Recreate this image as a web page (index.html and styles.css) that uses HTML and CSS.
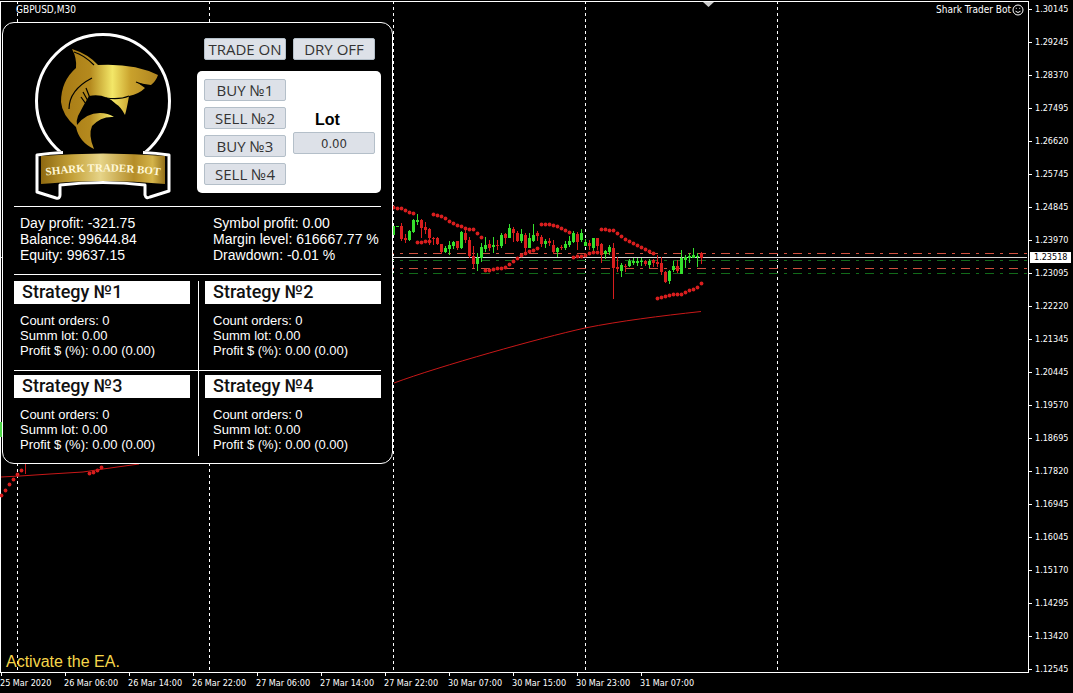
FILE: index.html
```
<!DOCTYPE html>
<html lang="en">
<head>
<meta charset="utf-8">
<title>GBPUSD,M30</title>
<link rel="stylesheet" href="styles.css">
</head>
<body>
<main class="terminal">
  <section class="chart">
    <svg class="plot" id="plot" aria-hidden="true"></svg>
    <header class="chart-head">
      <span>GBPUSD,M30</span>
      <span class="expert">Shark Trader Bot
        <svg class="smile" viewBox="0 0 12 12"><circle cx="6" cy="6" r="5"/><path d="M3.5 7.2Q6 9.8 8.5 7.2M4.3 3.8v1M7.7 3.8v1"/></svg>
      </span>
    </header>
    <section class="panel">
      <div class="top">
        <svg class="logo" viewBox="0 0 138 170" role="img" aria-label="Shark Trader Bot">
          <defs>
            <linearGradient id="gold" x1="0" x2="1" y1="0" y2="0">
              <stop offset="0" stop-color="#a77a14"/><stop offset=".3" stop-color="#b58a1e"/><stop offset=".53" stop-color="#f3e768"/><stop offset=".72" stop-color="#c9a12c"/><stop offset="1" stop-color="#b08520"/>
            </linearGradient>
            <linearGradient id="ribbon" x1="0" x2="1" y1="0" y2="0">
              <stop offset="0" stop-color="#8e6910"/><stop offset=".25" stop-color="#c4a139"/><stop offset=".48" stop-color="#e6d488"/><stop offset=".75" stop-color="#b58d28"/><stop offset=".9" stop-color="#d4b44a"/><stop offset="1" stop-color="#94701a"/>
            </linearGradient>
            <path id="arc" d="M9 144Q69 135 129 144"/>
          </defs>
          <circle cx="69" cy="69" r="66.500" fill="none" stroke="#fff" stroke-width="3"/>
          <path d="M2.500 122Q16 120 29 119L109 119Q122 120 135 122V161L114 166L111 154Q69 148 27 154L25 166L2.500 160Z" fill="#000"/>
          <path d="M29 120.500Q16 121 3 123V160L22 166Q26 167 26 163V153Q69 148 111 153V163Q112 167 116 165L135 159V123Q122 121 109 120.500" fill="none" stroke="#fff" stroke-width="3" stroke-linejoin="round"/>
          <path d="M7 124Q69 119 131 124V152Q69 146 7 152Z" fill="url(#ribbon)"/>
          <text class="ribbon-text"><textPath href="#arc" startOffset="50%">SHARK TRADER BOT</textPath></text>
          <path d="M38 17Q54 22 64 33Q100 31 124 43Q122 49 117 53L104 51L111 56Q105 62 95 64Q93 76 91 83Q87 75 82 72Q71 61 55 64Q49 74 44 84Q42 89 43 93Q52 81 66 81Q74 81 80 85Q67 84 58 94Q54 103 60 117Q45 110 42 95Q28 83 27 70Q27 49 42 36Q43 26 38 17Z" fill="url(#gold)"/>
          <path d="M72 66Q86 68 95 64M35 77Q35 58 58 46M40 20Q50 23 60 33M52 56L56 66M49 60L54 69M47 65L52 72M102 50L110 53" fill="none" stroke="#000" stroke-width="1.200"/>
        </svg>
        <div class="controls">
          <div class="pair">
            <button class="btn">TRADE ON</button>
            <button class="btn">DRY OFF</button>
          </div>
          <div class="orders">
            <div class="order-list">
              <button class="btn">BUY №1</button>
              <button class="btn">SELL №2</button>
              <button class="btn">BUY №3</button>
              <button class="btn">SELL №4</button>
            </div>
            <div class="lot">
              <label for="lot">Lot</label>
              <input class="btn lot-input" id="lot" value="0.00">
            </div>
          </div>
        </div>
      </div>
      <div class="stats">
        <p>Day profit: -321.75<br>Balance: 99644.84<br>Equity: 99637.15</p>
        <p>Symbol profit: 0.00<br>Margin level: 616667.77 %<br>Drawdown: -0.01 %</p>
      </div>
      <div class="strategies">
        <article><h2>Strategy №1</h2><p>Count orders: 0<br>Summ lot: 0.00<br>Profit $ (%): 0.00 (0.00)</p></article>
        <article><h2>Strategy №2</h2><p>Count orders: 0<br>Summ lot: 0.00<br>Profit $ (%): 0.00 (0.00)</p></article>
        <article><h2>Strategy №3</h2><p>Count orders: 0<br>Summ lot: 0.00<br>Profit $ (%): 0.00 (0.00)</p></article>
        <article><h2>Strategy №4</h2><p>Count orders: 0<br>Summ lot: 0.00<br>Profit $ (%): 0.00 (0.00)</p></article>
      </div>
    </section>
    <p class="notice">Activate the EA.</p>
  </section>
  <aside class="prices">
    <ul>
      <li>1.30145</li><li>1.29245</li><li>1.28370</li><li>1.27495</li><li>1.26620</li><li>1.25745</li><li>1.24845</li><li>1.23970</li><li>1.23095</li><li>1.22220</li><li>1.21345</li><li>1.20445</li><li>1.19570</li><li>1.18695</li><li>1.17820</li><li>1.16945</li><li>1.16045</li><li>1.15170</li><li>1.14295</li><li>1.13420</li><li>1.12545</li>
    </ul>
    <span class="current">1.23518</span>
  </aside>
  <ol class="times">
    <li>25 Mar 2020</li><li>26 Mar 06:00</li><li>26 Mar 14:00</li><li>26 Mar 22:00</li><li>27 Mar 06:00</li><li>27 Mar 14:00</li><li>27 Mar 22:00</li><li>30 Mar 07:00</li><li>30 Mar 15:00</li><li>30 Mar 23:00</li><li>31 Mar 07:00</li>
  </ol>
</main>
<script src="chart.js"></script>
</body>
</html>
```
FILE: styles.css
```
* { box-sizing: border-box; margin: 0; padding: 0; }
body { background: #000; color: #fff; font: 10px/19px "DejaVu Sans Condensed", "DejaVu Sans", sans-serif; }
ul, ol { list-style: none; }
.terminal { display: grid; grid-template-columns: minmax(0, 1fr) 44px; grid-template-rows: 1fr 20px; min-height: 100vh; overflow: hidden; }
.chart { position: relative; margin-top: 1px; border: 1px solid #fff; }
.plot { position: absolute; left: -1px; top: -2px; width: 100%; height: 100%; overflow: hidden; }
.chart-head { position: relative; display: flex; justify-content: space-between; padding: 0 4px 0 15px; line-height: 16px; }
.expert { display: flex; align-items: center; gap: 1px; }
.smile { width: 12px; height: 12px; fill: none; stroke: #fff; stroke-width: 1; }

.panel { position: absolute; left: 1px; top: 20px; width: 391px; padding: 9px 11px 7px; background: #000; border: 1px solid #fff; border-radius: 12px; font-family: "Liberation Sans", Arial, sans-serif; }
.top { display: flex; justify-content: space-between; height: 175px; padding-left: 20px; border-bottom: 1px solid #fff; }
.logo { width: 138px; height: 170px; }
.ribbon-text { font: 600 11px "Liberation Serif", serif; fill: #fff8d8; text-anchor: middle; }
.controls { width: 184px; }
.pair { display: flex; gap: 7px; padding: 6px 6px 11px 7px; }
.btn { width: 82px; height: 22px; background: #dde1e8; color: #333; border: 1px solid #b4bfc9; border-radius: 2px; font: 15px/20px "Open Sans", sans-serif; text-align: center; white-space: nowrap; }
.orders { display: flex; gap: 7px; padding: 8px 6px 8px 7px; background: #fff; border-radius: 5px; }
.order-list { display: flex; flex-direction: column; gap: 6px; }
.lot { display: flex; flex-direction: column; gap: 3px; padding-top: 31px; color: #000; }
.lot label { padding-right: 13px; font-size: 16px; font-weight: 700; line-height: 19px; text-align: center; }
.lot-input { font: 13px/20px "DejaVu Sans Condensed", sans-serif; }
.stats { display: grid; grid-template-columns: 193px 1fr; height: 68px; padding: 8px 0 0 6px; border-bottom: 1px solid #fff; font-size: 14px; line-height: 16px; white-space: nowrap; }
.strategies { position: relative; display: grid; grid-template-columns: 1fr 1fr; column-gap: 15px; padding-top: 6px; }
.strategies::before { content: ""; position: absolute; left: 184px; top: 6px; bottom: 0; border-left: 1px solid #fff; }
.strategies::after { content: ""; position: absolute; left: 0; right: 0; top: 95px; border-top: 1px solid #fff; }
.strategies article { height: 94px; }
.strategies article:nth-child(n+3) { height: 81px; }
.strategies h2 { height: 23px; padding-left: 8px; background: #fff; color: #111; font: 500 18px/22px Roboto, sans-serif; }
.strategies p { padding: 9px 0 0 6px; font-size: 13px; line-height: 15px; white-space: nowrap; }
.strategies article:nth-child(even) p { padding-left: 8px; }
.notice { position: absolute; left: 5px; bottom: 1px; color: #f6d64a; font: 16px/19px "Liberation Sans", Arial, sans-serif; }

.prices { position: relative; }
.prices ul { display: flex; flex-direction: column; gap: 14px; margin-bottom: -10px; }
.prices li { display: flex; align-items: center; gap: 3px; }
.prices li, .current { font-size: 9px; line-height: 19px; }
.prices li::before { content: ""; width: 3px; border-top: 1px solid #fff; }
.current { position: absolute; left: 1px; top: 252px; width: 41px; padding-left: 4px; background: #fff; color: #000; line-height: 11px; }
.times { grid-column: 1 / -1; display: grid; grid-template-columns: repeat(11, 64px); font-size: 9px; line-height: 14px; white-space: nowrap; }
.times li::before { content: ""; display: block; height: 3px; margin-left: 1px; border-left: 1px solid #fff; }
```
FILE: chart.js
```
const plot = document.getElementById("plot");
const draw = (name, attrs) => {
  const el = document.createElementNS("http://www.w3.org/2000/svg", name);
  for (const key in attrs) el.setAttribute(key, attrs[key]);
  plot.append(el);
};
const RED = "#d81e1e", GREEN = "#35e02c";

// Session separators
for (const x of [17, 209, 393, 585, 777])
  draw("line", { x1: x + 0.5, x2: x + 0.5, y1: 1, y2: "100%", stroke: "#fff", "stroke-dasharray": "3 3" });

// Order levels and current price
for (const [y, color] of [[253, "#d0503f"], [260, "#126a1a"], [268, "#d0503f"], [273, "#126a1a"]])
  draw("line", { x1: 385, x2: "100%", y1: y + 0.5, y2: y + 0.5, stroke: color, "stroke-dasharray": "9 6 3 6" });
draw("line", { x1: 1, x2: "100%", y1: 257.5, y2: 257.5, stroke: "#d8d8d8" });

// Candles in thirds of a pixel: type, high, low, body top, body bottom
const candles = `g 94 120 94 120|g 94 96 94 96|r 85 138 92 133|r 117 143 128 136|g 105 137 108 134|g 72 115 76 111|g 58 90 75 81|r 72 128 76 98|r 80 118 96 104|r 98 150 102 130|r 126 150 128 132|r 125 150 129 147|r 147 178 148 170|g 153 173 160 171|g 138 180 151 162|g 138 163 140 153|r 137 165 139 160|g 108 163 112 158|r 98 143 115 134|r 125 188 135 183|r 152 218 182 207|g 175 228 190 208|g 145 200 155 188|g 125 172 150 162|r 135 168 148 160|g 125 175 150 156|r 135 165 150 154|g 115 158 120 153|r 115 148 118 128|g 87 130 100 128|r 95 140 102 115|r 108 142 114 138|g 103 143 118 137|r 115 178 120 160|g 115 160 130 158|g 87 140 120 138|r 108 138 114 124|r 120 155 125 146|g 132 158 138 148|r 130 152 138 145|r 135 178 150 170|g 155 185 158 172|r 150 165 157 160|g 138 165 148 160|g 122 155 138 150|g 108 145 114 140|r 110 165 116 140|g 103 140 114 135|g 132 152 140 152|r 135 165 145 152|g 128 170 130 158|r 128 165 130 153|r 145 205 148 180|g 165 192 168 178|g 150 180 155 170|r 145 312 158 218|r 185 230 215 222|g 205 245 210 228|r 208 230 212 215|g 193 215 198 212|g 190 210 198 203|g 188 212 198 203|g 190 212 198 202|r 195 212 197 208|g 193 218 198 210|r 192 215 196 205|r 180 215 200 206|r 185 240 203 232|r 228 265 232 260|g 225 268 228 258|g 198 232 212 226|r 195 235 212 228|g 165 237 190 236|g 180 220 186 195|g 175 205 184 190|g 160 188 180 188|g 175 215 182 186|r 172 208 175 190`;
candles.split("|").forEach((row, i) => {
  const [type, ...v] = row.split(" ");
  const [high, low, top, bottom] = v.map(n => Math.round(195 + n / 3));
  const x = 393 + i * 4, fill = type === "g" ? GREEN : RED;
  draw("rect", { x, y: high, width: 1, height: Math.max(1, low - high), fill });
  draw("rect", { x: x - 1, y: top, width: 3, height: Math.max(1, bottom - top), fill });
});

// Parabolic SAR: first x, then y values four pixels apart
const sar = [
  [393, 37, 38, 40, 45, 50, 54],
  [433, 57, 60, 62, 70, 77, 84, 89, 94, 98, 102, 103, 115, 126],
  [417, 141, 141, 139, 138],
  [485, 226, 225, 223, 220, 219, 215, 208, 198, 188, 180, 173, 168, 165, 160],
  [541, 87, 88, 88, 91, 93, 99, 104, 112],
  [573, 187, 184, 183, 180, 174, 172, 172],
  [601, 103, 103, 104, 106, 115, 124, 132, 138, 145, 150, 156, 163, 168, 174],
  [657, 309, 306, 303, 301, 298, 297, 296, 290, 284, 281, 275, 265],
  [1, 901, 885, 867, 853, 837, 825],
  [89, 834, 832, 826, 815]
];
for (const [start, ...ys] of sar)
  ys.forEach((y, i) => draw("circle", { cx: start + i * 4 + 0.5, cy: Math.round(195 + y / 3) + 0.5, r: 1.9, fill: RED }));

// Moving average
draw("path", { d: "M1 477L20 476L50 474L83 472L103 469L139 464M25.5 464V474M394 383C440 366 540 338 585 328C620 321 660 316 701 311.500", fill: "none", stroke: "#c81818" });
draw("rect", { x: 0, y: 422, width: 2, height: 15, fill: "#4fd84a" });
draw("path", { d: "M703 2h11l-5.500 5z", fill: "#ccc" });
```
